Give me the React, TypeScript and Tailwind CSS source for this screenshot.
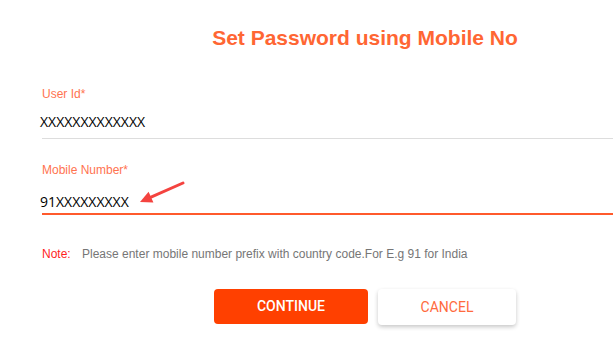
import React from "react";

const arial = { fontFamily: '"Liberation Sans", Arial, sans-serif' };

function Arrow() {
  return (
    <svg
      className="pointer-events-none absolute left-[136px] top-[178px]"
      width="52"
      height="28"
      viewBox="0 0 52 28"
    >
      <line x1="47" y1="5" x2="15" y2="19.15" stroke="#f4433f" strokeWidth="3" strokeLinecap="round" />
      <polygon points="4,24 17.4,24.6 12.6,13.7" fill="#f4433f" />
    </svg>
  );
}

export default function App() {
  return (
    <div className="relative h-[339px] w-[613px] overflow-hidden bg-white">
      <div className="ml-[42px] w-[646px]">
        <h1
          className="pt-[26px] text-center text-[21px] font-bold leading-[24px] text-[#ff6633]"
          style={arial}
        >
          Set Password using Mobile No
        </h1>

        <div className="mt-[37px]">
          <label className="block text-[12px] leading-[14px] text-[#ff7350]" style={arial}>
            User Id*
          </label>
          <div className="mt-[11px] border-b border-[#dddddd] pb-[7px]">
            <div className="ml-[-2px] font-['Open_Sans',sans-serif] text-[14px] leading-[19px] text-black">
              XXXXXXXXXXXXX
            </div>
          </div>
        </div>

        <div className="mt-[24px]">
          <label className="block text-[12px] leading-[14px] text-[#ff7350]" style={arial}>
            Mobile Number*
          </label>
          <div className="mt-[15px] border-b-2 border-[#ff5a2c] pb-[2px]">
            <div className="ml-[-2px] font-['Open_Sans',sans-serif] text-[14px] leading-[19px] text-black">
              91XXXXXXXXX
            </div>
          </div>
        </div>

        <p className="mt-[32px] flex text-[12px] leading-[14px]" style={arial}>
          <span className="w-[40px] text-[#ff1f1f]">Note:</span>
          <span className="text-[#767676]">
            Please enter mobile number prefix with country code.For E.g 91 for India
          </span>
        </p>

        <div className="mt-[28px] flex justify-center gap-[10px] font-['Roboto',sans-serif]">
          <button
            type="button"
            className="h-[35px] w-[154px] rounded-[4px] bg-[#ff4000] text-[14px] font-medium text-white"
          >
            CONTINUE
          </button>
          <button
            type="button"
            className="h-[36px] w-[138px] rounded-[4px] bg-white text-[14px] text-[#ff6a3d] shadow-[0_2px_4px_rgba(0,0,0,0.22)]"
          >
            CANCEL
          </button>
        </div>
      </div>
      <Arrow />
    </div>
  );
}
